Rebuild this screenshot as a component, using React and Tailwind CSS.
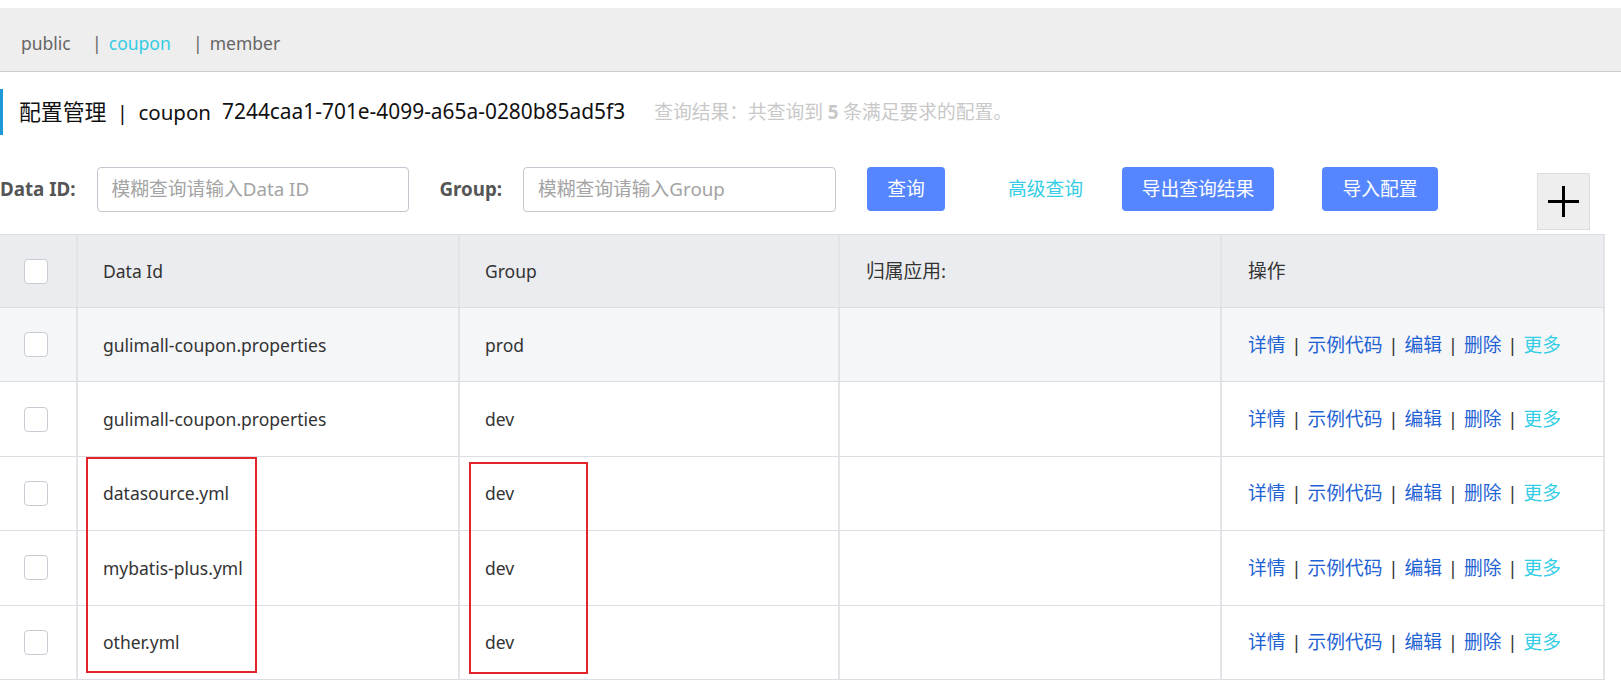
import React from "react";

// ─── Data ──────────────────────────────────────────────────────────────────────
const ROWS = [
  { id: "gulimall-coupon.properties", group: "prod", hover: true },
  { id: "gulimall-coupon.properties", group: "dev" },
  { id: "datasource.yml", group: "dev" },
  { id: "mybatis-plus.yml", group: "dev" },
  { id: "other.yml", group: "dev" },
];

const GRID = "grid grid-cols-[78px_382px_380px_382px_383px]";
const CELL = "flex items-center border-r-2 border-[#e3e4e8]";

function Checkbox() {
  return <span className="block w-[24px] h-[25px] rounded-[4px] border border-[#c9cbd2] bg-white" />;
}

function Actions() {
  const sep = <span className="inline-block w-[22px] text-center text-[#333]">|</span>;
  return (
    <div className="flex items-center text-[18.75px] text-[#1e62d4]">
      <span>详情</span>{sep}
      <span>示例代码</span>{sep}
      <span>编辑</span>{sep}
      <span>删除</span>{sep}
      <span className="text-[#33cde5]">更多</span>
    </div>
  );
}

function BlueButton({ children, w }) {
  return (
    <button className={`h-[44px] rounded-[4px] bg-[#5586ff] text-white text-[18.75px] ${w}`}>{children}</button>
  );
}

// ─── Main ──────────────────────────────────────────────────────────────────────
export default function App() {
  return (
    <div className="relative w-[1621px] h-[687px] overflow-hidden bg-white font-['Noto_Sans','Noto_Sans_CJK_SC',sans-serif]">
      <div className="h-[8px]" />

      {/* Namespace bar */}
      <nav className="h-[64px] bg-[#eeeeee] border-b border-[#cccccc] flex items-center pl-[21px] pt-[7px] text-[17.5px] text-[#666]">
        <span>public</span>
        <span className="inline-block w-[10px] text-center ml-[21px]">|</span>
        <span className="ml-[7px] text-[#33cde5]">coupon</span>
        <span className="inline-block w-[10px] text-center ml-[22px]">|</span>
        <span className="ml-[7px]">member</span>
      </nav>

      {/* Title */}
      <div className="mt-[17px] h-[46px] border-l-[3px] border-[#1f9ad6] flex items-center pl-[16px] text-[#111]">
        <span className="text-[21.875px]">配置管理</span>
        <span className="inline-block w-[32px] text-center text-[20.5px]">|</span>
        <span className="text-[20.5px]">coupon</span>
        <span className="ml-[11px] text-[20.9px]">7244caa1-701e-4099-a65a-0280b85ad5f3</span>
        <span className="ml-[29px] text-[18.75px] text-[#c8c8c8]">
          查询结果：共查询到 <b className="font-bold">5</b> 条满足要求的配置。
        </span>
      </div>

      {/* Search row */}
      <div className="mt-[32px] h-[45px] flex items-start">
        <label className="h-[45px] flex items-center font-bold text-[18.75px] text-[#555]">Data ID:</label>
        <div className="ml-[21px] w-[312px] h-[45px] rounded-[4px] border border-[#c4c6cf] flex items-center pl-[14px] text-[18.75px] text-[#a3a3a3]">
          模糊查询请输入Data ID
        </div>
        <label className="ml-[31px] h-[45px] flex items-center font-bold text-[18.75px] text-[#555]">Group:</label>
        <div className="ml-[21px] w-[313px] h-[45px] rounded-[4px] border border-[#c4c6cf] flex items-center pl-[14px] text-[18.75px] text-[#a3a3a3]">
          模糊查询请输入Group
        </div>
        <div className="ml-[31px]"><BlueButton w="w-[78px]">查询</BlueButton></div>
        <span className="ml-[63px] h-[44px] flex items-center text-[18.75px] text-[#33cde5]">高级查询</span>
        <div className="ml-[39px]"><BlueButton w="w-[152px]">导出查询结果</BlueButton></div>
        <div className="ml-[48px]"><BlueButton w="w-[116px]">导入配置</BlueButton></div>
        <div className="ml-[99px] mt-[6px] w-[53px] h-[57px] shrink-0 bg-[#eeeeee] border border-[#dddddd] flex items-center justify-center">
          <svg width="31" height="31" viewBox="0 0 31 31">
            <line x1="0" y1="15.5" x2="31" y2="15.5" stroke="#000" strokeWidth="3" />
            <line x1="15.5" y1="0" x2="15.5" y2="31" stroke="#000" strokeWidth="3" />
          </svg>
        </div>
      </div>

      {/* Table */}
      <div className="mt-[22px] w-[1605px] border-t border-[#dcdde2] text-[17.5px] text-[#333]">
        <div className={`${GRID} h-[73px] bg-[#ebecf0] border-b border-[#dcdde2]`}>
          <div className={`${CELL} pl-[24px]`}><Checkbox /></div>
          <div className={`${CELL} pl-[25px]`}>Data Id</div>
          <div className={`${CELL} pl-[25px]`}>Group</div>
          <div className={`${CELL} pl-[26px] text-[18.75px]`}>归属应用:</div>
          <div className={`${CELL} pl-[26px] text-[18.75px]`}>操作</div>
        </div>
        {ROWS.map((r, i) => (
          <div key={i} className={`${GRID} h-[74.4px] border-b border-[#dcdde2] ${r.hover ? "bg-[#f5f6f8]" : "bg-white"}`}>
            <div className={`${CELL} pl-[24px]`}><Checkbox /></div>
            <div className={`${CELL} pl-[25px]`}>{r.id}</div>
            <div className={`${CELL} pl-[25px]`}>{r.group}</div>
            <div className={CELL} />
            <div className={`${CELL} pl-[26px]`}><Actions /></div>
          </div>
        ))}
      </div>

      {/* Red annotation boxes */}
      <div className="absolute left-[86px] top-[457px] w-[171px] h-[216px] border-2 border-[#e3242b]" />
      <div className="absolute left-[469px] top-[462px] w-[119px] h-[212px] border-2 border-[#e3242b]" />
    </div>
  );
}
